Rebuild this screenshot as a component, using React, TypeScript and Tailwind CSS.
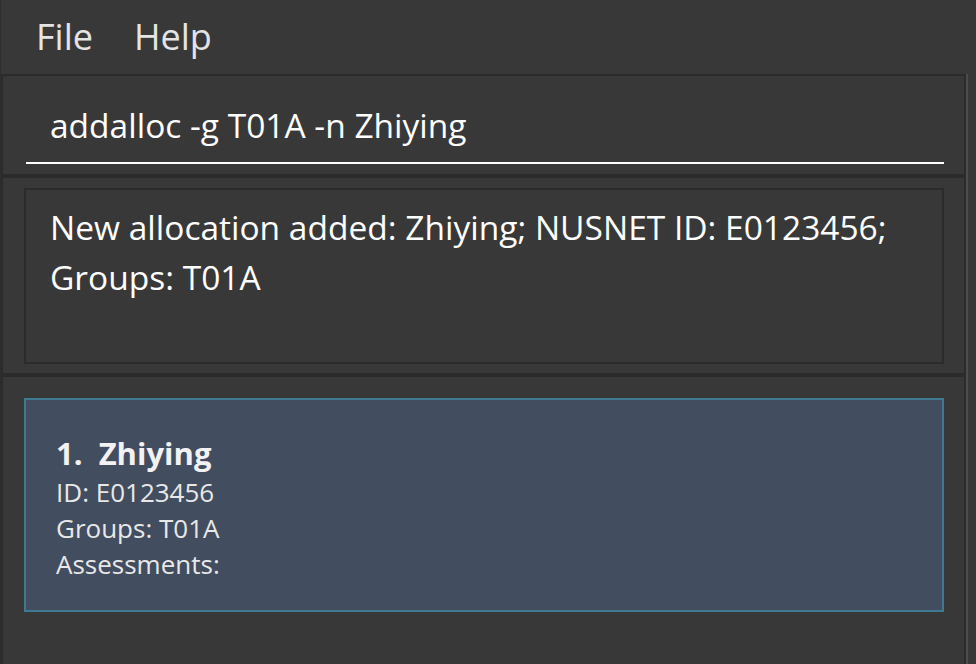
export default function App() {
  return (
    <div
      className="w-[976px] h-[664px] overflow-hidden bg-[#383838] flex flex-col border-l border-[#2e2e2e]"
      style={{ fontFamily: '"Open Sans", "Liberation Sans", sans-serif' }}
    >
      {/* Menu bar */}
      <div className="h-[74px] flex items-start pt-[13px] pl-[35px] gap-[41px] text-[36px] leading-[48px] text-[#e4e4e4]">
        <span>File</span>
        <span>Help</span>
      </div>

      <div className="flex-1 flex">
        <div className="w-[965px] flex flex-col">
          {/* Command box */}
          <div className="border-2 border-[#2b2b2b] pt-[27px] pb-[10px] pl-[23px] pr-[20px]">
            <div className="border-b-2 border-white pb-[15px] pl-[24px] text-[33.5px] leading-[44px] text-white">
              addalloc -g T01A -n Zhiying
            </div>
          </div>

          {/* Result display */}
          <div className="border-2 border-[#2b2b2b] pt-[10px] pb-[9px] pl-[21px] pr-[20px]">
            <div className="h-[176px] border-2 border-[#2b2b2b] pt-[12px] pl-[24px] text-[33.5px] leading-[50px] text-white">
              <p>New allocation added: Zhiying; NUSNET ID: E0123456;</p>
              <p>Groups: T01A</p>
            </div>
          </div>

          {/* Allocation list */}
          <div className="flex-1 border-2 border-b-0 border-[#2b2b2b] pt-[21px] pl-[21px] pr-[20px]">
            <div className="border-2 border-[#3e7b91] bg-[#424d5f] pt-[32px] pb-[28px] pl-[30px]">
              <p className="text-[31px] leading-[42px] font-bold text-[#f2f2f2]">
                1.&nbsp;&nbsp;Zhiying
              </p>
              <div className="text-[26px] leading-[36px] text-[#e8e8e8]">
                <p>ID: E0123456</p>
                <p>Groups: T01A</p>
                <p>Assessments:</p>
              </div>
            </div>
          </div>
        </div>
        <div className="w-[2px] bg-[#4c4c4c]" />
      </div>
    </div>
  );
}
